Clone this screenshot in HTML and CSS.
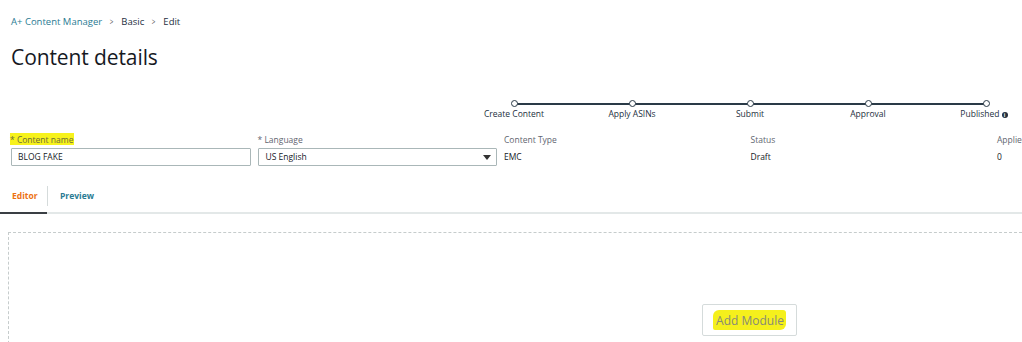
FILE: index.html
```html
<!DOCTYPE html>
<html>
<head>
<meta charset="utf-8">
<link rel="stylesheet" href="styles.css">
</head>
<body>
<div class="page">
  <nav class="crumbs">
    <a class="crumb-link">A+ Content Manager</a>
    <span class="sep">&gt;</span>
    <span class="crumb">Basic</span>
    <span class="sep">&gt;</span>
    <span class="crumb">Edit</span>
  </nav>
  <h1 class="title">Content details</h1>

  <div class="stepper">
    <div class="step"><span class="dot"></span><span class="step-label">Create Content</span></div>
    <div class="step"><span class="dot"></span><span class="step-label">Apply ASINs</span></div>
    <div class="step"><span class="dot"></span><span class="step-label">Submit</span></div>
    <div class="step"><span class="dot"></span><span class="step-label">Approval</span></div>
    <div class="step last"><span class="dot"></span><span class="step-label">Published <span class="info">i</span></span></div>
  </div>

  <div class="fields">
    <div class="field">
      <div class="label"><span class="hl">* Content name</span></div>
      <div class="input">BLOG FAKE</div>
    </div>
    <div class="field">
      <div class="label">* Language</div>
      <div class="input select">US English<span class="caret"></span></div>
    </div>
    <div class="field">
      <div class="label">Content Type</div>
      <div class="value">EMC</div>
    </div>
    <div class="field">
      <div class="label">Status</div>
      <div class="value">Draft</div>
    </div>
    <div class="field narrow">
      <div class="label">Applied</div>
      <div class="value">0</div>
    </div>
  </div>
</div>

<div class="tabs">
  <div class="tab active">Editor</div>
  <div class="tab-divider"></div>
  <div class="tab">Preview</div>
</div>

<div class="canvas">
  <div class="add-wrap">
    <button class="add-btn"><span class="hl-btn">Add Module</span></button>
  </div>
</div>
</body>
</html>
```

FILE: styles.css
```css
html, body {
  margin: 0;
  padding: 0;
  overflow: hidden;
  width: 1022px;
  height: 342px;
  background: #fff;
  font-family: "Open Sans", "Noto Sans", sans-serif;
  color: #16191f;
}
.page {
  padding: 0 0 0 11px;
}
.crumbs {
  display: flex;
  align-items: center;
  height: 14px;
  padding-top: 14px;
  font-size: 9.5px;
  gap: 7px;
}
.crumb-link { color: #2a7b93; }
.crumb { color: #232f3e; }
.sep { color: #555; font-size: 9px; transform: scaleX(0.7); }
.title {
  margin: 16px 0 0 0;
  font-size: 21px;
  font-weight: 400;
  line-height: 26px;
  color: #16191f;
  letter-spacing: -0.1px;
}
.stepper {
  display: flex;
  margin: 30px 0 0 444px;
}
.step {
  width: 118px;
  flex-shrink: 0;
  display: flex;
  flex-direction: column;
  align-items: center;
  position: relative;
}
.step::after {
  content: "";
  position: absolute;
  left: 59px;
  width: 118px;
  top: 3px;
  height: 2px;
  background: #2a3a47;
}
.step.last::after { display: none; }
.dot {
  width: 5px;
  height: 5px;
  border: 1.5px solid #2a3a47;
  border-radius: 50%;
  background: #fff;
  position: relative;
  z-index: 1;
}
.step-label {
  margin-top: 1px;
  font-size: 8.5px;
  line-height: 12px;
  color: #232f3e;
  white-space: nowrap;
}
.step.last .step-label { margin-left: -4px; }
.info {
  display: inline-block;
  width: 6px;
  height: 6px;
  border-radius: 50%;
  background: #232f3e;
  color: #fff;
  font-size: 5px;
  line-height: 6px;
  text-align: center;
  font-weight: 700;
  vertical-align: 0;
}
.fields {
  display: grid;
  grid-template-columns: repeat(4, 239.5px) 30px;
  column-gap: 7px;
  margin-top: 13px;
}
.label {
  font-size: 8.5px;
  color: #5f6670;
  height: 15px;
  line-height: 14px;
  white-space: nowrap;
}
.hl {
  background: #f7f21c;
  padding: 1px 1px 0 0;
  margin-left: -1px;
  color: #6b6b3a;
}
.input {
  box-sizing: border-box;
  height: 18px;
  border: 1px solid #aab7b8;
  border-radius: 1px;
  font-size: 8.5px;
  line-height: 16px;
  padding-left: 6px;
  color: #16191f;
  position: relative;
}
.select { padding-left: 7px; }
.caret {
  position: absolute;
  right: 5px;
  top: 6px;
  width: 0;
  height: 0;
  border-left: 4px solid transparent;
  border-right: 4px solid transparent;
  border-top: 5px solid #333;
}
.value {
  font-size: 8.5px;
  line-height: 18px;
  color: #16191f;
}
.tabs {
  display: flex;
  align-items: center;
  height: 32px;
  margin-top: 14px;
  border-bottom: 2px solid #e3e8e8;
  position: relative;
}
.tab {
  font-size: 8.5px;
  font-weight: 700;
  color: #2a7b93;
  padding: 0 12px;
  height: 32px;
  line-height: 32px;
}
.tab.active {
  color: #ec7211;
  padding: 0 12px 0 12px;
  width: 23px;
  box-shadow: inset 0 -2px 0 #3a3f44;
  margin-bottom: -2px;
  height: 34px;
  line-height: 32px;
  box-sizing: content-box;
}
.tab-divider {
  width: 1px;
  height: 20px;
  background: #d5dbdb;
}
.canvas {
  margin: 18px 0 0 8px;
  height: 200px;
  border-top: 1px dashed #c6cccc;
  border-left: 1px dashed #c6cccc;
  position: relative;
}
.add-wrap {
  display: flex;
  padding: 71px 0 0 693px;
}
.add-btn {
  box-sizing: border-box;
  width: 95px;
  height: 32px;
  border: 1px solid #d5dbdb;
  border-radius: 2px;
  background: #fff;
  font-family: "Open Sans", "Noto Sans", sans-serif;
  font-size: 12px;
  color: #7d8385;
  padding: 0;
}
.hl-btn {
  background: #f5f01c;
  padding: 2px 2px 1px 3px;
  border-radius: 6px 3px 6px 2px;
  color: #878a78;
}
```
